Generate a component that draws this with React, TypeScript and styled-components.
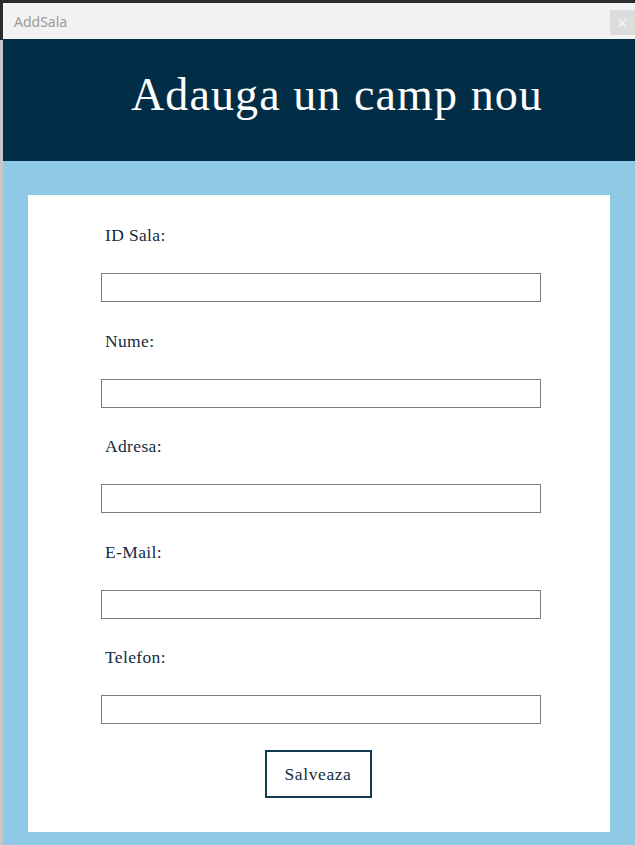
import React from "react";
import styled, { createGlobalStyle } from "styled-components";

const Global = createGlobalStyle`
  html, body { margin: 0; padding: 0; background: #2b2b2b; }
  body { width: 635px; height: 845px; overflow: hidden; }
  * { box-sizing: border-box; }
`;

const Page = styled.div`
  display: flex;
  flex-direction: column;
  width: 635px;
  height: 845px;
`;

const TopLine = styled.div`
  height: 3px;
  background: #2b2b2b;
`;

const Row = styled.div`
  display: flex;
  flex: 1;
`;

const LeftStrip = styled.div`
  width: 3px;
  background: linear-gradient(#2b2b2b 0 37px, #c6c6c6 37px 100%);
`;

const Window = styled.div`
  flex: 1;
  display: flex;
  flex-direction: column;
`;

const TitleBar = styled.div`
  height: 36px;
  background: #f2f2f2;
  display: flex;
  align-items: center;
  justify-content: space-between;
  padding-left: 11px;
  font-family: "Noto Sans", "Open Sans", sans-serif;
  font-size: 14px;
  color: #9a9a9a;
`;

const CloseButton = styled.div`
  width: 25px;
  height: 25px;
  background: #dcdcdc;
  color: #f4f4f4;
  display: flex;
  align-items: center;
  justify-content: center;
  font-family: "DejaVu Sans", sans-serif;
  font-size: 15px;
  align-self: flex-end;
  margin-bottom: 4px;
`;

const Header = styled.div`
  height: 122px;
  background: #012e46;
  display: flex;
  align-items: center;
  padding-left: 128px;
  padding-bottom: 12px;
`;

const HeaderTitle = styled.h1`
  margin: 0;
  font-family: "Palatino Linotype", "Book Antiqua", Palatino, "Liberation Serif", serif;
  font-weight: normal;
  font-size: 46px;
  color: #ffffff;
  letter-spacing: 1.1px;
`;

const Body = styled.div`
  flex: 1;
  background: #8ecae6;
  padding: 34px 25px 13px 25px;
  display: flex;
`;

const Card = styled.div`
  flex: 1;
  background: #ffffff;
  display: flex;
  flex-direction: column;
  padding: 30px 68px 0 73px;
`;

const Form = styled.form`
  display: flex;
  flex-direction: column;
  gap: 28.5px;
`;

const Field = styled.div`
  display: flex;
  flex-direction: column;
  gap: 28px;
`;

const Label = styled.label`
  padding-left: 4px;
  height: 20px;
  line-height: 20px;
  font-family: "Palatino Linotype", "Book Antiqua", Palatino, "Liberation Serif", serif;
  font-size: 17.5px;
  letter-spacing: 0.35px;
  color: #132c3e;
`;

const Input = styled.input`
  width: 440px;
  height: 29px;
  border: 1px solid #7a7a7a;
  background: #fff;
  outline: none;
  padding: 2px 4px;
`;

const ButtonRow = styled.div`
  display: flex;
  justify-content: center;
  margin-top: -2.5px;
  padding-right: 7px;
`;

const SaveButton = styled.button`
  width: 107px;
  height: 48px;
  background: #fff;
  border: 2px solid #0f3a50;
  font-family: "Palatino Linotype", "Book Antiqua", Palatino, "Liberation Serif", serif;
  font-size: 17.5px;
  letter-spacing: 0.6px;
  color: #132c3e;
  cursor: pointer;
  padding: 0;
`;

const fields = ["ID Sala:", "Nume:", "Adresa:", "E-Mail:", "Telefon:"];

export default function App() {
  return (
    <>
      <Global />
      <Page>
        <TopLine />
        <Row>
          <LeftStrip />
          <Window>
            <TitleBar>
              <span>AddSala</span>
              <CloseButton>×</CloseButton>
            </TitleBar>
            <Header>
              <HeaderTitle>Adauga un camp nou</HeaderTitle>
            </Header>
            <Body>
              <Card>
                <Form onSubmit={(e) => e.preventDefault()}>
                  {fields.map((f) => (
                    <Field key={f}>
                      <Label>{f}</Label>
                      <Input type="text" />
                    </Field>
                  ))}
                  <ButtonRow>
                    <SaveButton type="submit">Salveaza</SaveButton>
                  </ButtonRow>
                </Form>
              </Card>
            </Body>
          </Window>
        </Row>
      </Page>
    </>
  );
}
